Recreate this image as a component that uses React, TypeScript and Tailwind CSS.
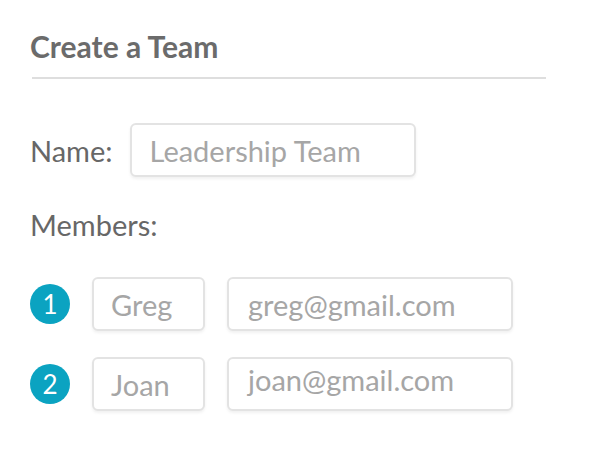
import React from "react";

const font = { fontFamily: 'Lato, "Open Sans", sans-serif' };

function Box({ w, text, pl, extra = "" }: { w: string; text: string; pl: string; extra?: string }) {
  return (
    <div
      className={`${w} h-[54px] rounded-[6px] border-2 border-[#e3e3e3] bg-white shadow-[0_2px_3px_rgba(0,0,0,0.06)] flex items-center ${pl} ${extra} text-[29px] leading-[35px] text-[#a6a6a6]`}
    >
      {text}
    </div>
  );
}

export default function App() {
  const members = [
    { n: "1", name: "Greg", email: "greg@gmail.com", extra: "" },
    { n: "2", name: "Joan", email: "joan@gmail.com", extra: "pb-[9px]" },
  ];
  return (
    <div className="w-[600px] h-[465px] bg-white pl-[30px]" style={font}>
      <div className="pt-[29px] h-[60px]">
        <h1 className="h-[34px] leading-[34px] text-[30px] font-bold text-[#6b6b6b]">
          Create a Team
        </h1>
      </div>
      <div className="mt-[17px] ml-[2px] w-[514px] h-[2px] bg-[#dedede]" />
      <div className="mt-[44px] flex items-center gap-[17px]">
        <span className="text-[29px] text-[#676767] leading-[35px]">Name:</span>
        <Box w="w-[286px]" text="Leadership Team" pl="pl-[18px]" />
      </div>
      <div className="mt-[30px] text-[29px] leading-[35px] text-[#676767]">Members:</div>
      <div className="mt-[35px] flex flex-col gap-[26px]">
        {members.map((m) => (
          <div key={m.n} className="flex items-center">
            <div className="w-[40px] h-[40px] rounded-full bg-[#0ba3c1] text-white text-[26px] leading-[30px] flex items-center justify-center">
              {m.n}
            </div>
            <div className="ml-[22px]">
              <Box w="w-[113px]" text={m.name} pl="pl-[17px]" />
            </div>
            <div className="ml-[22px]">
              <Box w="w-[286px]" text={m.email} pl="pl-[19px]" extra={m.extra} />
            </div>
          </div>
        ))}
      </div>
    </div>
  );
}
